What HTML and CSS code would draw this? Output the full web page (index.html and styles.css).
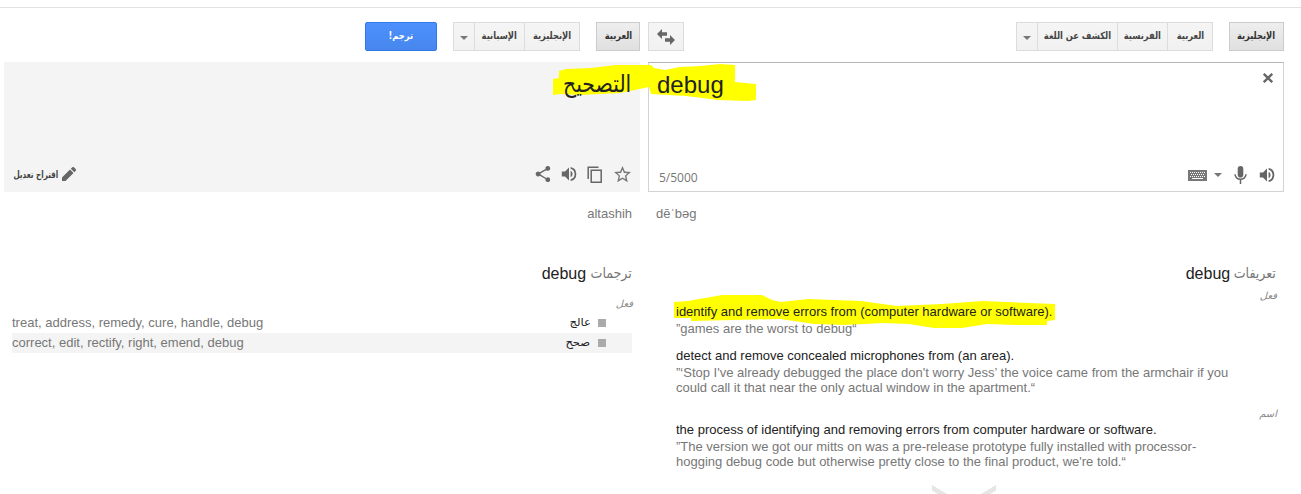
FILE: index.html
```
<!DOCTYPE html>
<html lang="ar">
<head>
<meta charset="utf-8">
<title>debug</title>
<link rel="stylesheet" href="styles.css">
</head>
<body>
<div class="topline"></div>
<main class="columns">
  <section class="col target">
    <div class="toolbar">
      <button class="btn translate"><span class="ar" dir="rtl">ترجم!</span></button>
      <div class="group">
        <button class="btn arrow"><i class="caret"></i></button>
        <button class="btn w50"><span class="ar" dir="rtl">الإسبانية</span></button>
        <button class="btn w55"><span class="ar" dir="rtl">الإنجليزية</span></button>
      </div>
      <button class="btn active w44"><span class="ar" dir="rtl">العربية</span></button>
    </div>
    <div class="box result">
      <div class="word" dir="rtl"><span class="ar">التصحيح</span></div>
      <div class="tools">
        <div class="suggest"><span class="ar" dir="rtl">اقتراح تعديل</span>
          <svg width="14" height="14" viewBox="3 3 18 18" fill="#666"><path d="M3 16.500V21h4.500L17.800 10.700l-4.500-4.500zM20.400 8c.8-.8.8-1.800 0-2.600l-1.800-1.800c-.8-.8-1.800-.8-2.600 0l-1.700 1.600 4.500 4.500z"/></svg>
        </div>
        <div class="icons">
          <svg width="16" height="16" viewBox="3 2 18 20" fill="#666"><path d="M18 16.100c-.8 0-1.400.3-2 .8l-7.100-4.200a3 3 0 0 0 0-1.400L16 7.200A3 3 0 1 0 15 5l.1.700L8 9.800a3 3 0 1 0 0 4.400l7.100 4.200-.1.600a3 3 0 1 0 3-2.900z"/></svg>
          <svg width="16" height="16" viewBox="2 2 20 20" fill="#666"><path d="M3 9v6h4l5 5V4L7 9zM16.500 12A4.500 4.500 0 0 0 14 8v8a4.500 4.500 0 0 0 2.500-4zM14 3.200v2.100a7 7 0 0 1 0 13.400v2.100a9 9 0 0 0 0-17.600z"/></svg>
          <svg width="16" height="17" viewBox="0 0 16 17" fill="none" stroke="#666" stroke-width="1.500"><path d="M1.200 13V1.200H11.500M4.200 4.200h10v12h-10z"/></svg>
          <svg width="17" height="17" viewBox="2 2 20 20" fill="#777"><path d="M22 9.200l-7.200-.6L12 2 9.200 8.600 2 9.200l5.500 4.700L5.800 21l6.200-3.700 6.200 3.700-1.600-7.100zM12 15.400l-3.800 2.300 1-4.300-3.300-2.900 4.400-.4L12 6.100l1.700 4 4.400.4-3.300 2.900 1 4.300z"/></svg>
        </div>
      </div>
    </div>
    <div class="translit right">altashih</div>
    <h2 class="heading" dir="rtl"><span class="ar">ترجمات</span><span class="en">debug</span></h2>
    <div class="pos pos-left" dir="rtl"><span class="ar">فعل</span></div>
    <div class="row"><span>treat, address, remedy, cure, handle, debug</span><span class="term"><span class="ar" dir="rtl">عالج</span><i class="sq"></i></span></div>
    <div class="row alt"><span>correct, edit, rectify, right, emend, debug</span><span class="term"><span class="ar" dir="rtl">صحح</span><i class="sq"></i></span></div>
  </section>
  <section class="col source">
    <div class="toolbar">
      <button class="btn swap"><svg width="18" height="16" viewBox="0 0 18 16" fill="#666"><path d="M0 5l5-5v3.200h5v3.600H5V10zM18 11l-5-5v3.200H8v3.600h5V16z"/></svg></button>
      <div class="group">
        <button class="btn arrow"><i class="caret"></i></button>
        <button class="btn w80"><span class="ar" dir="rtl">الكشف عن اللغة</span></button>
        <button class="btn w50"><span class="ar" dir="rtl">الفرنسية</span></button>
        <button class="btn w45"><span class="ar" dir="rtl">العربية</span></button>
      </div>
      <button class="btn active w55"><span class="ar" dir="rtl">الإنجليزية</span></button>
    </div>
    <div class="box input">
      <div class="entry"><span>debug</span>
        <svg width="10" height="10" viewBox="0 0 10 10" stroke="#666" stroke-width="2.300"><path d="M.8.8l8.400 8.400M9.200.8L.8 9.200"/></svg>
      </div>
      <div class="tools">
        <span class="count">5/5000</span>
        <div class="icons">
          <svg width="19" height="11" viewBox="0 0 19 11"><path fill="#777" d="M0 0h19v11H0z"/><path stroke="#fff" stroke-dasharray="1 1" d="M2 2.500h15M3 4.500h14M2 6.500h15"/><path stroke="#fff" d="M4 8.500h11"/></svg>
          <i class="caret kb"></i>
          <svg width="13" height="18" viewBox="0 0 13 18" fill="#666"><rect x="3.700" width="5.600" height="11.500" rx="2.800"/><path fill="none" stroke="#666" stroke-width="1.500" d="M1 8.300a5.500 5 0 0 0 11 0M6.500 13v5"/></svg>
          <svg width="16" height="16" viewBox="2 2 20 20" fill="#666"><path d="M3 9v6h4l5 5V4L7 9zM16.500 12A4.500 4.500 0 0 0 14 8v8a4.500 4.500 0 0 0 2.500-4zM14 3.200v2.100a7 7 0 0 1 0 13.400v2.100a9 9 0 0 0 0-17.600z"/></svg>
        </div>
      </div>
    </div>
    <div class="translit">dēˈbəg</div>
    <h2 class="heading defs" dir="rtl"><span class="ar">تعريفات</span><span class="en">debug</span></h2>
    <div class="pos pos-verb" dir="rtl"><span class="ar">فعل</span></div>
    <div class="def first"><p>identify and remove errors from (computer hardware or software).</p><p class="quote">”games are the worst to debug“</p></div>
    <div class="def second"><p>detect and remove concealed microphones from (an area).</p><p class="quote">”‘Stop I've already debugged the place don't worry Jess’ the voice came from the armchair if you<br>could call it that near the only actual window in the apartment.“</p></div>
    <div class="pos pos-noun" dir="rtl"><span class="ar">اسم</span></div>
    <div class="def"><p>the process of identifying and removing errors from computer hardware or software.</p><p class="quote">”The version we got our mitts on was a pre-release prototype fully installed with processor-<br>hogging debug code but otherwise pretty close to the final product, we're told.“</p></div>
  </section>
</main>
<svg class="marker" width="1301" height="494" viewBox="0 0 1301 494" fill="#ff0">
  <path d="M553 79L559 78V71L566 69L591 68L616 65H651L654 68L665 70L680 67L700 66L720 64L735 65V82L756 84V100L748 101L718 100L686 96L651 94L649 87L620 93L580 95L560 94L553 95Z"/>
  <path d="M674 302L688 301L722 295L762 295L772 300L781 302L808 299L861 301L897 306L942 304L982 301L1055 304V320L1047 321V325L1017 325L987 324L962 328H934L909 324L884 323L844 325L814 324L794 321L780 319L691 321V318H674Z"/>
</svg>
<svg class="more" width="64" height="9" viewBox="0 0 64 9" fill="#e5e5e5"><path d="M0 0l15 9H6L0 5.500zM64 0L49 9h9l6-3.500z"/></svg>
</body>
</html>
```
FILE: styles.css
```
* { box-sizing: border-box; }
body { margin: 0; height: 494px; overflow: hidden; background: #fff; color: #222; font: 13px/15px "Liberation Sans", "DejaVu Sans", sans-serif; position: relative; }
p, h2 { margin: 0; }
.ar { display: inline-block; white-space: nowrap; font-family: "DejaVu Sans", sans-serif; }
.topline { height: 8px; border-bottom: 1px solid #e2e2e2; }
.columns { display: flex; gap: 8px; padding: 14px 0 0 4px; }
.col { width: 636px; flex: none; display: flex; flex-direction: column; }
.toolbar { display: flex; height: 29px; margin-bottom: 11px; }
.group { display: flex; }
.btn { display: flex; align-items: center; justify-content: center; height: 29px; padding: 0 0 2px; border: 1px solid #dcdcdc; background: linear-gradient(#f5f5f5, #f1f1f1); color: #444; font-weight: bold; font-size: 10px; line-height: 20px; }
.btn .ar { flex: none; transform: scaleX(.83); }
.group .btn + .btn { border-left: 0; }
.btn.arrow { width: 22px; padding: 3px 0 0; }
.w44 { width: 44px; }
.w45 { width: 45px; }
.w50 { width: 50px; }
.w55 { width: 55px; }
.w80 { width: 80px; }
.caret { border: 4px solid transparent; border-top-color: #777; border-bottom: 0; }
.active { background: linear-gradient(#eee, #e0e0e0); border-color: #ccc; color: #333; margin-left: 16px; }
.translate { width: 72px; margin-right: 16px; border: 1px solid #3079ed; border-radius: 2px; background: linear-gradient(#4d90fe, #4787ed); color: #fff; }
.target .toolbar { justify-content: flex-end; }
.swap { width: 36px; padding: 0; margin-right: auto; }
.box { height: 130px; display: flex; flex-direction: column; justify-content: space-between; }
.result { background: #f4f4f4; padding: 6px 9px 9px 10px; }
.word { font-size: 24px; line-height: 32px; }
.word .ar { transform: scaleX(.85); transform-origin: right; }
.word, .entry, .first { position: relative; z-index: 2; }
.tools { display: flex; justify-content: space-between; align-items: center; height: 18px; }
.icons { display: flex; align-items: center; }
.result .icons { gap: 10px; }
.result .icons svg:nth-child(-n+3) { margin-left: -1px; margin-right: 1px; }
.suggest { display: flex; align-items: center; gap: 4px; width: 62px; justify-content: flex-end; font-weight: bold; font-size: 10px; color: #444; }
.suggest .ar { transform: scaleX(.72); transform-origin: right; }
.suggest svg { flex: none; }
.input { border: 1px solid #d3d3d3; border-top-color: #b5b5b5; padding: 7px 8px 7px; }
.entry { display: flex; justify-content: space-between; font-size: 24px; line-height: 30px; }
.entry svg { margin: 3px 2px 0 0; }
.count { color: #777; font: 12px/14px "Open Sans", sans-serif; padding: 6px 0 0 2px; }
.kb { margin: 0 12px 0 7px; }
.input .icons svg:last-child { margin-left: 12px; }
.translit { height: 15px; margin-top: 14px; padding: 0 8px; color: #777; }
.right { text-align: right; }
.heading { display: flex; gap: 5px; height: 20px; margin-top: 43px; padding: 0 8px; font-size: 16px; line-height: 20px; font-weight: normal; }
.heading .ar { color: #777; font-size: 14px; line-height: 18px; transform: scaleX(.9); transform-origin: right; margin-left: -5px; }
.defs .ar { margin-left: -6px; }
.pos { height: 15px; padding: 0 7px; color: #888; font-size: 10px; font-style: italic; }
.pos-left { margin-top: 12px; height: 17px; }
.pos-verb { margin-top: 4px; height: 16px; }
.pos-noun { margin-top: 11px; height: 16px; }
.row { display: flex; justify-content: space-between; align-items: center; height: 20px; margin: 0 8px; padding: 0 26px 1px 0; color: #777; }
.row.alt { background: #f4f4f4; }
.term { display: flex; align-items: center; gap: 12px; color: #222; font-size: 11px; }
.term .ar { transform: scaleX(1.05); margin-right: -4px; }
.sq { width: 8px; height: 8px; margin-right: 0; background: #aaa; }
.def { padding-left: 28px; }
.def p { white-space: nowrap; }
.def p + p { margin-top: 2px; }
.second { margin-top: 12px; }
.quote { color: #777; }
.marker { position: absolute; left: 0; top: 0; z-index: 1; }
.more { position: absolute; left: 932px; top: 485px; }
```
